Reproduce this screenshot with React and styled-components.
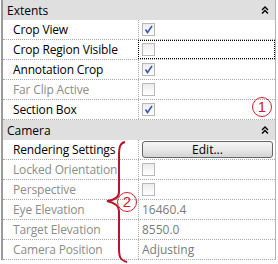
import React from 'react';
import styled, { createGlobalStyle } from 'styled-components';

const Global = createGlobalStyle`
  html, body { margin: 0; padding: 0; background: #ffffff; }
  body { font-family: "Open Sans", "Noto Sans", sans-serif; }
`;

const Frame = styled.div`
  position: relative;
  width: 278px;
  height: 264px;
  overflow: hidden;
  background: #ffffff;
`;

const Panel = styled.div`
  margin-left: 1px;
  width: 272px;
  border-left: 2px solid #9a9a9a;
  border-right: 1px solid #b4b4b4;
  display: flex;
  flex-direction: column;
`;

const Header = styled.div`
  height: 20px;
  display: flex;
  align-items: center;
  justify-content: space-between;
  background: #dfdfdf;
  padding: 0 6px 0 4px;
  font-size: 12px;
  color: #000;
`;

const Row = styled.div`
  height: 19px;
  display: grid;
  grid-template-columns: 135px 1fr;
  border-bottom: 1px dotted #a8a8a8;
  font-size: 12px;
`;

const Label = styled.div`
  display: flex;
  align-items: center;
  padding-left: 10px;
  letter-spacing: -0.15px;
  color: ${p => (p.$dim ? '#8c8c8c' : '#000000')};
  white-space: nowrap;
`;

const Value = styled.div`
  display: flex;
  align-items: center;
  padding-left: 3px;
  border-left: 1px dotted #a8a8a8;
  color: #7a7a7a;
  outline: ${p => (p.$focus ? '1px dotted #000' : 'none')};
  outline-offset: -1px;
`;

const Box = styled.span`
  width: 11px;
  height: 11px;
  border: 1px solid #b8b8b8;
  background: linear-gradient(#ececec, #ffffff);
  display: flex;
  align-items: center;
  justify-content: center;
`;

const Button = styled.div`
  flex: 1;
  height: 15px;
  margin-right: 2px;
  border: 1px solid #666;
  border-radius: 3px;
  background: linear-gradient(#f6f6f6 0%, #e8e8e8 50%, #d4d4d4 100%);
  display: flex;
  align-items: center;
  justify-content: center;
  color: #000;
  font-size: 12px;
`;

const Badge = styled.div`
  position: absolute;
  left: ${p => p.$x}px;
  top: ${p => p.$y}px;
  width: 18px;
  height: 18px;
  border: 1px solid #d0202c;
  border-radius: 50%;
  color: #d0202c;
  font-family: "Liberation Sans", sans-serif;
  font-size: 15px;
  line-height: 18px;
  text-align: center;
`;

const Brace = styled.svg`
  position: absolute;
  left: 104px;
  top: 140px;
`;

const Chevron = () => (
  <svg width="8" height="8" viewBox="0 0 8 8">
    <path d="M1 4 L4 1 L7 4 M1 7.5 L4 4.5 L7 7.5" fill="none" stroke="#000" strokeWidth="1.4" />
  </svg>
);

const Check = ({ on }) => (
  <Box>
    {on && (
      <svg width="9" height="9" viewBox="0 0 9 9">
        <path d="M1.5 4.5 L3.5 7.5 L8 1" fill="none" stroke="#3c5aa8" strokeWidth="1.6" />
      </svg>
    )}
  </Box>
);

const extents = [
  { label: 'Crop View', check: true },
  { label: 'Crop Region Visible', check: false, focus: true },
  { label: 'Annotation Crop', check: true },
  { label: 'Far Clip Active', check: false, dim: true },
  { label: 'Section Box', check: true },
];

const camera = [
  { label: 'Rendering Settings', button: 'Edit...' },
  { label: 'Locked Orientation', check: false, dim: true },
  { label: 'Perspective', check: false, dim: true },
  { label: 'Eye Elevation', text: '16460.4', dim: true },
  { label: 'Target Elevation', text: '8550.0', dim: true },
  { label: 'Camera Position', text: 'Adjusting', dim: true },
];

const PropRow = ({ item }) => (
  <Row>
    <Label $dim={item.dim}>{item.label}</Label>
    <Value $focus={item.focus}>
      {item.button && <Button>{item.button}</Button>}
      {item.check !== undefined && <Check on={item.check} />}
      {item.text}
    </Value>
  </Row>
);

export default function App() {
  return (
    <Frame>
      <Global />
      <Panel>
        <Header>
          <span>Extents</span>
          <Chevron />
        </Header>
        {extents.map(it => <PropRow key={it.label} item={it} />)}
        <Header>
          <span>Camera</span>
          <Chevron />
        </Header>
        {camera.map(it => <PropRow key={it.label} item={it} />)}
      </Panel>
      <Badge $x={252} $y={97}>1</Badge>
      <Badge $x={117} $y={192}>2</Badge>
      <Brace width="26" height="124" viewBox="0 0 26 124">
        <path
          d="M21 2 C16 3 15 7 15 16 L15 52 C15 57 12 60 3 61 C12 63 15 66 15 71 L15 108 C15 117 16 120 23 122"
          fill="none"
          stroke="#b8142a"
          strokeWidth="2"
        />
      </Brace>
    </Frame>
  );
}
